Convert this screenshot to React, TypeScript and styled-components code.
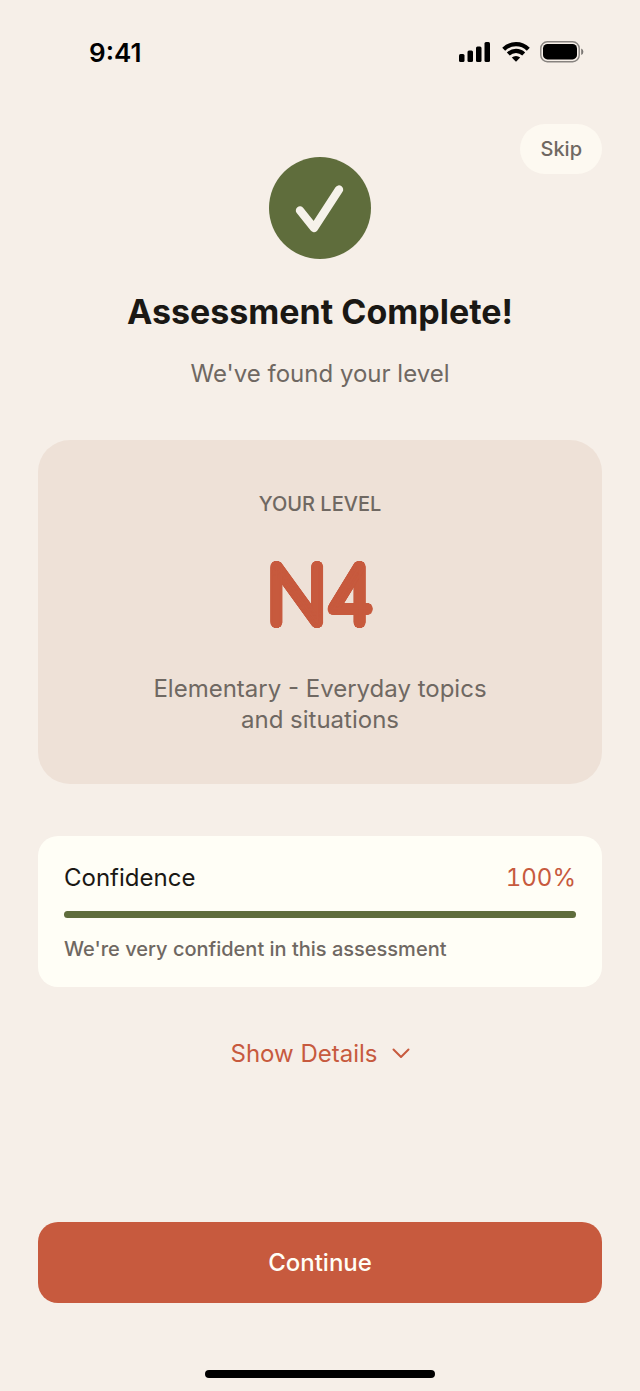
import React from "react";
import styled, { createGlobalStyle } from "styled-components";

const color = {
  page: "#f6efe8",
  ink: "#1a1814",
  muted: "#6f6862",
  accent: "#c75a3e",
  green: "#5f6d3c",
  panel: "#eee1d7",
  card: "#fffef6",
};

const GlobalStyle = createGlobalStyle`
  *, *::before, *::after { box-sizing: border-box; }
  body {
    margin: 0;
    background: ${color.page};
    color: ${color.ink};
    font-family: Inter, "Liberation Sans", sans-serif;
    font-size: 24px;
    line-height: 31px;
  }
  h1, p { margin: 0; }
  button { font: inherit; border: 0; cursor: pointer; }
`;

const Screen = styled.div`
  position: relative;
  display: flex;
  flex-direction: column;
  min-height: 100vh;
`;

const StatusBar = styled.div`
  display: flex;
  align-items: center;
  justify-content: space-between;
  height: 104px;
  padding: 0 56px 0 89px;
`;

const Clock = styled.time`
  color: #000;
  font-size: 26px;
  font-weight: 600;
`;

const StatusIcons = styled.div`
  display: flex;
  align-items: center;
  gap: 10px;
  svg { display: block; }
`;

const SkipButton = styled.button`
  position: absolute;
  top: 124px;
  right: 38px;
  height: 50px;
  padding: 0 20px;
  border-radius: 25px;
  background: #fdf9f1;
  color: ${color.muted};
  font-size: 20px;
  font-weight: 500;
`;

const Content = styled.main`
  flex: 1;
  display: flex;
  flex-direction: column;
  padding: 53px 38px 88px;
`;

const Intro = styled.header`
  display: flex;
  flex-direction: column;
  align-items: center;
  text-align: center;
  margin-bottom: 51px;
`;

const Badge = styled.div`
  width: 102px;
  height: 102px;
  border-radius: 50%;
  background: ${color.green};
  margin-bottom: 32px;
  svg { display: block; }
`;

const Title = styled.h1`
  font-size: 34px;
  line-height: 42px;
  font-weight: 700;
  margin-bottom: 25px;
`;

const Muted = styled.p<{ $small?: boolean }>`
  color: ${color.muted};
  font-size: ${(p) => (p.$small ? 20 : 24)}px;
  line-height: ${(p) => (p.$small ? 26 : 31)}px;
  font-weight: ${(p) => (p.$small ? 500 : 400)};
`;

const LevelCard = styled.section`
  display: flex;
  flex-direction: column;
  align-items: center;
  text-align: center;
  padding: 51px 100px 49px;
  border-radius: 32px;
  background: ${color.panel};
  margin-bottom: 52px;
`;

/* Rounded heavy strokes: a thin face thickened evenly by a ring of shadows. */
const ring = (radius: number, steps: number) =>
  Array.from({ length: steps }, (_, i) => {
    const a = (i * 2 * Math.PI) / steps;
    return `${(radius * Math.cos(a)).toFixed(2)}px ${(radius * Math.sin(a)).toFixed(2)}px 0 ${color.accent}`;
  }).join(", ");

const Level = styled.p`
  padding: 27px 0;
  color: ${color.accent};
  font-size: 78px;
  line-height: 102px;
  font-weight: 100;
  text-shadow: ${ring(5, 32)}, ${ring(3, 16)};
`;

const ConfidenceCard = styled.section`
  display: flex;
  flex-direction: column;
  gap: 18px;
  padding: 26px 26px 25px;
  border-radius: 20px;
  background: ${color.card};
`;

const Row = styled.div`
  display: flex;
  justify-content: space-between;
`;

const Percent = styled.span`
  color: ${color.accent};
  font-variant-numeric: tabular-nums;
`;

const Track = styled.div`
  height: 7px;
  border-radius: 4px;
  background: ${color.panel};
`;

const Fill = styled.div`
  height: 100%;
  border-radius: 4px;
  background: ${color.green};
`;

const DetailsButton = styled.button`
  align-self: center;
  display: flex;
  align-items: center;
  gap: 14px;
  margin-top: 51px;
  padding: 0;
  background: none;
  color: ${color.accent};
`;

const ContinueButton = styled.button`
  height: 81px;
  margin-top: auto;
  border-radius: 20px;
  background: ${color.accent};
  color: ${color.card};
  font-weight: 500;
`;

const HomeIndicator = styled.div`
  position: absolute;
  bottom: 13px;
  left: 50%;
  width: 230px;
  height: 8px;
  margin-left: -115px;
  border-radius: 4px;
  background: #000;
`;

const Signal = () => (
  <svg width="33" height="20" viewBox="0 0 33 20" aria-hidden="true">
    <rect x="0" y="12" width="5.5" height="8" rx="1.5" />
    <rect x="8.5" y="8.5" width="5.5" height="11.5" rx="1.5" />
    <rect x="17" y="4.5" width="5.5" height="15.5" rx="1.5" />
    <rect x="25.5" y="0" width="5.5" height="20" rx="1.5" />
  </svg>
);

const Wifi = () => (
  <svg width="28" height="20" viewBox="0 0 28 20" aria-hidden="true">
    <g fill="none" stroke="#000" strokeWidth="4.2">
      <path d="M1.7 7.2a17.6 17.6 0 0 1 24.6 0" />
      <path d="M6.3 12.1a11 11 0 0 1 15.4 0" />
    </g>
    <path d="M14 19.8l-4.2-4.2a6 6 0 0 1 8.4 0z" />
  </svg>
);

const Battery = () => (
  <svg width="44" height="22" viewBox="0 0 44 22" aria-hidden="true">
    <rect x="0.8" y="0.8" width="38.4" height="19.9" rx="6.5" fill="none" stroke="#000" strokeOpacity="0.45" strokeWidth="1.4" />
    <rect x="3" y="3" width="34" height="15.4" rx="4.5" />
    <path d="M41.2 7.6v6.4q2.2-.8 2.2-3.2t-2.2-3.2z" fillOpacity="0.5" />
  </svg>
);

export default function App() {
  const confidence = 100;
  return (
    <Screen>
      <GlobalStyle />
      <StatusBar>
        <Clock>9:41</Clock>
        <StatusIcons>
          <Signal />
          <Wifi />
          <Battery />
        </StatusIcons>
      </StatusBar>
      <SkipButton type="button">Skip</SkipButton>
      <Content>
        <Intro>
          <Badge>
            <svg width="102" height="102" viewBox="0 0 102 102" aria-hidden="true">
              <path d="M31 53.5L45 71L70 32.5" fill="none" stroke="#f6f2ea" strokeWidth="8.4" strokeLinecap="round" strokeLinejoin="round" />
            </svg>
          </Badge>
          <Title>Assessment Complete!</Title>
          <Muted>We've found your level</Muted>
        </Intro>
        <LevelCard>
          <Muted $small>YOUR LEVEL</Muted>
          <Level>N4</Level>
          <Muted>Elementary - Everyday topics and situations</Muted>
        </LevelCard>
        <ConfidenceCard>
          <Row>
            <span id="confidence-label">Confidence</span>
            <Percent>{confidence}%</Percent>
          </Row>
          <Track role="progressbar" aria-labelledby="confidence-label" aria-valuenow={confidence} aria-valuemin={0} aria-valuemax={100}>
            <Fill style={{ width: `${confidence}%` }} />
          </Track>
          <Muted $small>We're very confident in this assessment</Muted>
        </ConfidenceCard>
        <DetailsButton type="button" aria-expanded="false">
          Show Details
          <svg width="18" height="11" viewBox="0 0 18 11" aria-hidden="true">
            <path d="M1.5 1.5L9 9l7.5-7.5" fill="none" stroke="currentColor" strokeWidth="2" strokeLinecap="round" strokeLinejoin="round" />
          </svg>
        </DetailsButton>
        <ContinueButton type="button">Continue</ContinueButton>
      </Content>
      <HomeIndicator />
    </Screen>
  );
}
